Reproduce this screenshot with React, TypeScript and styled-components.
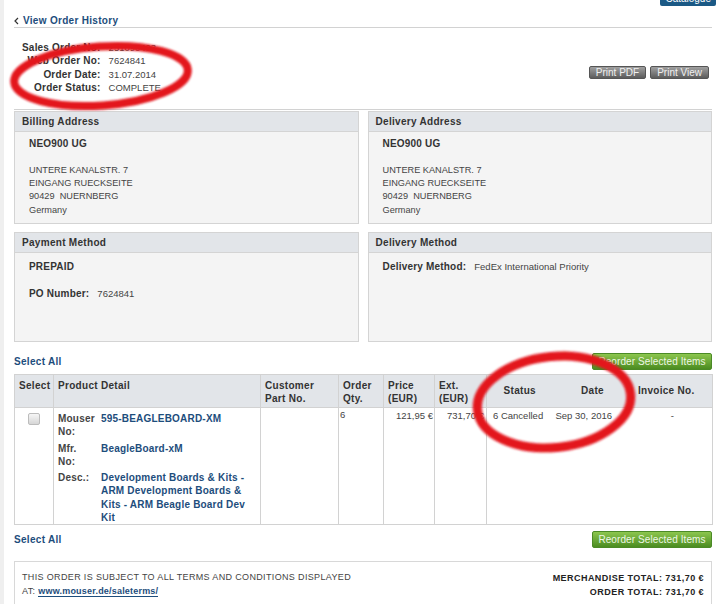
import styled, { createGlobalStyle } from "styled-components";

const GlobalStyle = createGlobalStyle`
  html, body {
    margin: 0;
    padding: 0;
    background: #fff;
  }
  body {
    font-family: "Liberation Sans", Arial, sans-serif;
    color: #333;
  }
`;

const LINK = "#1d4d7c";
const LINE = "#d2d2d2";
const HEAD_BG = "#e2e5e9";

const Root = styled.div`
  position: relative;
  width: 720px;
  height: 604px;
  overflow: hidden;
`;

const Page = styled.div`
  width: 720px;
  box-sizing: border-box;
  padding: 0 8px 0 10px;
  border-left: 4px solid #efefef;
`;

const TopStrip = styled.div`
  height: 7px;
  display: flex;
  justify-content: flex-end;
`;

const CatalogueButton = styled.div`
  margin-top: -8px;
  margin-right: -4px;
  height: 14px;
  line-height: 14px;
  padding: 0 5px;
  background: #1b5985;
  color: #fff;
  font-size: 10px;
  border-radius: 2px;
`;

const BackRow = styled.div`
  height: 20px;
  display: flex;
  align-items: flex-end;
  border-bottom: 1px solid ${LINE};
`;

const BackLink = styled.a`
  display: flex;
  align-items: center;
  gap: 4px;
  color: ${LINK};
  font-size: 10px;
  font-weight: bold;
  letter-spacing: 0.3px;
  line-height: 13px;
  text-decoration: none;
`;

const InfoSection = styled.div`
  display: flex;
  justify-content: space-between;
  align-items: flex-start;
  padding: 13px 3px 15px 8px;
  border-bottom: 1px solid ${LINE};
`;

const InfoGrid = styled.div`
  display: grid;
  grid-template-columns: auto auto;
  column-gap: 8px;
  line-height: 13.3px;
`;

const InfoLabel = styled.div`
  text-align: right;
  font-size: 10px;
  font-weight: bold;
  letter-spacing: 0.2px;
  color: #333;
`;

const InfoValue = styled.div`
  font-size: 9.5px;
  color: #444;
`;

const PrintButtons = styled.div`
  margin-top: 25px;
  display: flex;
  gap: 4px;
`;

const PrintButton = styled.button`
  height: 13px;
  padding: 0 6px;
  font-family: inherit;
  font-size: 10px;
  line-height: 11px;
  color: #f0f0f0;
  background: linear-gradient(#a0a0a0, #5c5c5c);
  border: 1px solid #555;
  border-radius: 2px;
`;

const PanelGrid = styled.div`
  margin-top: 1px;
  display: grid;
  grid-template-columns: 1fr 1fr;
  column-gap: 9px;
  row-gap: 8px;
`;

const Panel = styled.div<{ $minHeight?: number }>`
  box-sizing: border-box;
  min-height: ${(p) => p.$minHeight ?? 0}px;
  display: flex;
  flex-direction: column;
  border: 1px solid #d4d4d4;
  background: #f4f4f4;
`;

const PanelHeader = styled.div`
  height: 19px;
  line-height: 20px;
  padding: 0 7px;
  background: ${HEAD_BG};
  border-bottom: 1px solid #d4d4d4;
  font-size: 10px;
  font-weight: bold;
  letter-spacing: 0.3px;
  color: #333;
`;

const PanelBody = styled.div<{ $top?: number }>`
  flex: 1;
  padding: ${(p) => p.$top ?? 6}px 14px 6px;
  line-height: 13.3px;
  font-size: 9.2px;
  color: #444;
`;

const BoldLine = styled.div`
  font-size: 10px;
  font-weight: bold;
  letter-spacing: 0.2px;
  color: #333;
`;

const Spacer = styled.div`
  height: 13.3px;
`;

const Pair = styled.div`
  display: flex;
  align-items: baseline;
  gap: 8px;
`;

const PairValue = styled.span`
  font-size: 9.5px;
  color: #444;
`;

const ActionRow = styled.div<{ $top: number }>`
  margin-top: ${(p) => p.$top}px;
  height: 17px;
  display: flex;
  justify-content: space-between;
  align-items: center;
`;

const SelectAll = styled.a`
  color: ${LINK};
  font-size: 10px;
  font-weight: bold;
  letter-spacing: 0.3px;
  text-decoration: none;
`;

const ReorderButton = styled.button`
  width: 120px;
  height: 17px;
  padding: 0;
  font-family: inherit;
  font-size: 10px;
  letter-spacing: 0.1px;
  color: #eef7e4;
  background: linear-gradient(#8cc64e, #4b8c21);
  border: 1px solid #4b8a26;
  border-radius: 2px;
`;

const Table = styled.table`
  margin-top: 4px;
  width: 100%;
  table-layout: fixed;
  border-collapse: collapse;
  border: 1px solid ${LINE};
`;

const Col = styled.col<{ $w: number }>`
  width: ${(p) => p.$w}px;
`;

const HeadCell = styled.th<{ $center?: boolean; $joined?: boolean }>`
  height: 33px;
  box-sizing: border-box;
  padding: ${(p) => (p.$center ? "0 4px" : "4px 4px 0 4px")};
  vertical-align: ${(p) => (p.$center ? "middle" : "top")};
  text-align: ${(p) => (p.$center ? "center" : "left")};
  white-space: nowrap;
  background: ${HEAD_BG};
  border-bottom: 1px solid ${LINE};
  border-left: ${(p) => (p.$joined ? "none" : `1px solid ${LINE}`)};
  font-size: 10px;
  font-weight: bold;
  letter-spacing: 0.3px;
  line-height: 13px;
  color: #333;
`;

const InvoiceHead = styled(HeadCell)`
  padding-right: 16px;
`;

const Cell = styled.td<{
  $top?: number;
  $align?: "left" | "right" | "center";
  $joined?: boolean;
  $pad?: string;
}>`
  height: 115px;
  box-sizing: border-box;
  vertical-align: top;
  padding: ${(p) => p.$top ?? 0}px ${(p) => p.$pad ?? "4px"} 0;
  text-align: ${(p) => p.$align ?? "left"};
  border-left: ${(p) => (p.$joined ? "none" : `1px solid ${LINE}`)};
  font-size: 9.5px;
  line-height: 13px;
  color: #444;
  background: #fff;
`;

const Checkbox = styled.span`
  display: inline-block;
  width: 10px;
  height: 10px;
  border: 1px solid #bcbcbc;
  border-radius: 2px;
  background: linear-gradient(#f6f6f6, #d6d6d6);
`;

const DetailGrid = styled.div`
  display: grid;
  grid-template-columns: 38px 1fr;
  column-gap: 5px;
  row-gap: 3px;
  line-height: 13.3px;
`;

const DetailLabel = styled.div`
  font-size: 10px;
  font-weight: bold;
  letter-spacing: 0.2px;
  color: #444;
`;

const DetailValue = styled.a`
  font-size: 10px;
  font-weight: bold;
  letter-spacing: 0.2px;
  color: ${LINK};
  text-decoration: none;
`;

const Footer = styled.div`
  margin-top: 13px;
  display: flex;
  justify-content: space-between;
  padding: 9px 7px 14px;
  border: 1px solid #d8d8d8;
`;

const Terms = styled.div`
  font-size: 9px;
  line-height: 13.5px;
  letter-spacing: 0.35px;
  color: #444;
  text-transform: uppercase;
`;

const TermsLink = styled.a`
  color: ${LINK};
  font-weight: bold;
  letter-spacing: 0.2px;
  text-transform: none;
  text-decoration: none;
  border-bottom: 1px solid ${LINK};
`;

const Totals = styled.div`
  text-align: right;
  font-size: 9px;
  font-weight: bold;
  letter-spacing: 0.45px;
  line-height: 14px;
  color: #222;
`;

const Marks = styled.svg`
  position: absolute;
  left: 0;
  top: 0;
  pointer-events: none;
`;

const infoRows: [string, string][] = [
  ["Sales Order No:", "251090403"],
  ["Web Order No:", "7624841"],
  ["Order Date:", "31.07.2014"],
  ["Order Status:", "COMPLETE"],
];

const address = [
  "UNTERE KANALSTR. 7",
  "EINGANG RUECKSEITE",
  "90429\u00a0 NUERNBERG",
  "Germany",
];

const AddressPanel = ({ title }: { title: string }) => (
  <Panel>
    <PanelHeader>{title}</PanelHeader>
    <PanelBody $top={5}>
      <BoldLine>NEO900 UG</BoldLine>
      <Spacer />
      {address.map((line) => (
        <div key={line}>{line}</div>
      ))}
    </PanelBody>
  </Panel>
);

const Chevron = () => (
  <svg width="5" height="8" viewBox="0 0 5 8">
    <path d="M4 1 L1 4 L4 7" fill="none" stroke="#333" strokeWidth="1.2" />
  </svg>
);

export default function App() {
  return (
    <Root>
      <GlobalStyle />
      <Page>
        <TopStrip>
          <CatalogueButton>Catalogue</CatalogueButton>
        </TopStrip>
        <BackRow>
          <BackLink href="#">
            <Chevron />
            View Order History
          </BackLink>
        </BackRow>

        <InfoSection>
          <InfoGrid>
            {infoRows.flatMap(([label, value]) => [
              <InfoLabel key={label}>{label}</InfoLabel>,
              <InfoValue key={value}>{value}</InfoValue>,
            ])}
          </InfoGrid>
          <PrintButtons>
            <PrintButton>Print PDF</PrintButton>
            <PrintButton>Print View</PrintButton>
          </PrintButtons>
        </InfoSection>

        <PanelGrid>
          <AddressPanel title="Billing Address" />
          <AddressPanel title="Delivery Address" />
          <Panel $minHeight={110}>
            <PanelHeader>Payment Method</PanelHeader>
            <PanelBody $top={7}>
              <BoldLine>PREPAID</BoldLine>
              <Spacer />
              <Pair>
                <BoldLine>PO Number:</BoldLine>
                <PairValue>7624841</PairValue>
              </Pair>
            </PanelBody>
          </Panel>
          <Panel $minHeight={110}>
            <PanelHeader>Delivery Method</PanelHeader>
            <PanelBody $top={7}>
              <Pair>
                <BoldLine>Delivery Method:</BoldLine>
                <PairValue>FedEx International Priority</PairValue>
              </Pair>
            </PanelBody>
          </Panel>
        </PanelGrid>

        <ActionRow $top={11}>
          <SelectAll href="#">Select All</SelectAll>
          <ReorderButton>Reorder Selected Items</ReorderButton>
        </ActionRow>

        <Table>
          <colgroup>
            <Col $w={39} />
            <Col $w={207} />
            <Col $w={78} />
            <Col $w={45} />
            <Col $w={51} />
            <Col $w={52} />
            <Col $w={66} />
            <Col $w={80} />
            <Col $w={80} />
          </colgroup>
          <thead>
            <tr>
              <HeadCell $joined>Select</HeadCell>
              <HeadCell>Product Detail</HeadCell>
              <HeadCell>
                Customer
                <br />
                Part No.
              </HeadCell>
              <HeadCell>
                Order
                <br />
                Qty.
              </HeadCell>
              <HeadCell>
                Price
                <br />
                (EUR)
              </HeadCell>
              <HeadCell>
                Ext.
                <br />
                (EUR)
              </HeadCell>
              <HeadCell $center>Status</HeadCell>
              <HeadCell $center $joined>
                Date
              </HeadCell>
              <InvoiceHead $center $joined>
                Invoice No.
              </InvoiceHead>
            </tr>
          </thead>
          <tbody>
            <tr>
              <Cell $joined $align="center" $top={5}>
                <Checkbox />
              </Cell>
              <Cell $top={4}>
                <DetailGrid>
                  <DetailLabel>Mouser No:</DetailLabel>
                  <DetailValue href="#">595-BEAGLEBOARD-XM</DetailValue>
                  <DetailLabel>Mfr. No:</DetailLabel>
                  <DetailValue href="#">BeagleBoard-xM</DetailValue>
                  <DetailLabel>Desc.:</DetailLabel>
                  <DetailValue href="#">
                    Development Boards &amp; Kits - ARM Development Boards
                    &amp; Kits - ARM Beagle Board Dev Kit
                  </DetailValue>
                </DetailGrid>
              </Cell>
              <Cell />
              <Cell $top={0} $pad="1px">
                6
              </Cell>
              <Cell $top={1} $align="right" $pad="1px">
                121,95 €
              </Cell>
              <Cell $top={1} $align="right" $pad="2px">
                731,70 €
              </Cell>
              <Cell $top={1} $pad="6px">
                6 Cancelled
              </Cell>
              <Cell $top={1} $joined $pad="3px">
                Sep 30, 2016
              </Cell>
              <Cell $top={1} $joined $align="center" $pad="0 24px 0 0">
                -
              </Cell>
            </tr>
          </tbody>
        </Table>

        <ActionRow $top={6}>
          <SelectAll href="#">Select All</SelectAll>
          <ReorderButton>Reorder Selected Items</ReorderButton>
        </ActionRow>

        <Footer>
          <Terms>
            This order is subject to all terms and conditions displayed
            <br />
            at: <TermsLink href="#">www.mouser.de/saleterms/</TermsLink>
          </Terms>
          <Totals>
            MERCHANDISE TOTAL: 731,70 €
            <br />
            ORDER TOTAL: 731,70 €
          </Totals>
        </Footer>
      </Page>

      <Marks width="720" height="604" viewBox="0 0 720 604">
        <defs>
          <filter id="soft" x="-10%" y="-20%" width="120%" height="140%">
            <feGaussianBlur stdDeviation="1.1" />
          </filter>
        </defs>
        <g fill="none" stroke="#e3131b" filter="url(#soft)">
          <ellipse
            cx="101"
            cy="76"
            rx="87"
            ry="29.5"
            strokeWidth="8"
            transform="rotate(-4 101 76)"
          />
          <ellipse
            cx="554"
            cy="402"
            rx="77"
            ry="45.5"
            strokeWidth="9"
            transform="rotate(-6 554 402)"
          />
        </g>
      </Marks>
    </Root>
  );
}
